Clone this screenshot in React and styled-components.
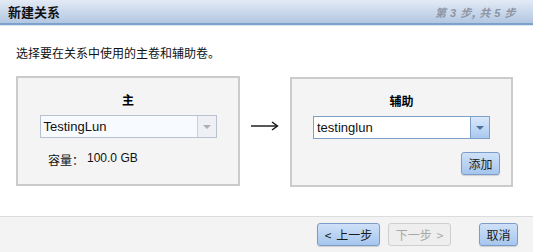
import React from "react";
import styled, { createGlobalStyle } from "styled-components";

const Global = createGlobalStyle`
  html, body {
    margin: 0;
    padding: 0;
    background: #ffffff;
  }
  body {
    font-family: "Liberation Sans", "Noto Sans CJK SC", sans-serif;
    font-size: 12px;
    color: #000;
  }
`;

const Wizard = styled.div`
  width: 533px;
  height: 252px;
  display: flex;
  flex-direction: column;
  background: #fff;
`;

const Header = styled.div`
  height: 23px;
  display: flex;
  align-items: center;
  justify-content: space-between;
  padding: 0 17px 0 8px;
  background: linear-gradient(#e3eaf5, #b3c7e2);
  border-bottom: 2px solid #7ba2cb;
  box-shadow: 0 1px 0 #dfe7f1;
`;

const Title = styled.div`
  font-family: "Noto Sans CJK SC", sans-serif;
  font-weight: bold;
  font-size: 13px;
  color: #111;
`;

const Step = styled.div`
  font-family: "Liberation Sans", "Noto Sans CJK SC", sans-serif;
  font-style: italic;
  font-weight: bold;
  font-size: 11px;
  color: #8c95a3;
  letter-spacing: 0.5px;
`;

const Body = styled.div`
  flex: 1;
  padding: 19px 16px 0 16px;
  display: flex;
  flex-direction: column;
`;

const Intro = styled.div`
  font-family: "Noto Sans CJK SC", sans-serif;
  font-size: 12px;
  color: #111;
  height: 18px;
  line-height: 18px;
`;

const PanelRow = styled.div`
  margin-top: 14px;
  display: flex;
  align-items: flex-start;
`;

const Panel = styled.div`
  box-sizing: border-box;
  width: ${(p) => p.$w}px;
  height: 110px;
  margin-top: ${(p) => p.$top || 0}px;
  border: 2px solid #cbcbcb;
  background: #f4f4f4;
  display: flex;
  flex-direction: column;
  align-items: center;
  padding-top: 14px;
`;

const PanelTitle = styled.div`
  font-family: "Noto Sans CJK SC", sans-serif;
  font-weight: bold;
  font-size: 12px;
  height: 16px;
  line-height: 16px;
`;

const Select = styled.div`
  box-sizing: border-box;
  width: 177px;
  height: 23px;
  margin-top: 7px;
  display: flex;
  border: 1px solid ${(p) => (p.$active ? "#7e9fc6" : "#b9c1cf")};
  background: ${(p) => (p.$active ? "#fff" : "#f7fbff")};
`;

const SelectText = styled.div`
  flex: 1;
  padding-left: 3px;
  line-height: 21px;
  font-size: 13px;
  color: #111;
`;

const SelectButton = styled.div`
  width: 18px;
  display: flex;
  align-items: center;
  justify-content: center;
  border-left: 1px solid ${(p) => (p.$active ? "#7e9fc6" : "#c9cfd9")};
  background: ${(p) =>
    p.$active ? "linear-gradient(#d9e8fb, #a9c9f0)" : "#eef0f4"};
  &::after {
    content: "";
    border-left: 4px solid transparent;
    border-right: 4px solid transparent;
    border-top: 4px solid ${(p) => (p.$active ? "#4f6f9a" : "#a9b0bb")};
  }
`;

const Capacity = styled.div`
  align-self: flex-start;
  margin: 13px 0 0 30px;
  font-size: 12px;
  color: #111;
  display: flex;
  gap: 3px;
`;

const Cjk = styled.span`
  font-family: "Noto Sans CJK SC", sans-serif;
`;

const Arrow = styled.div`
  width: 50px;
  display: flex;
  justify-content: center;
  padding-top: 45px;
`;

const AddRow = styled.div`
  align-self: stretch;
  display: flex;
  justify-content: flex-end;
  padding-right: 11px;
  margin-top: 13px;
`;

const Button = styled.button`
  box-sizing: border-box;
  height: 23px;
  min-width: ${(p) => p.$w || 39}px;
  padding: 0 6px;
  border-radius: 3px;
  font-family: "Noto Sans CJK SC", sans-serif;
  font-size: 12px;
  border: 1px solid ${(p) => (p.disabled ? "#cfcfcf" : "#7b9cc6")};
  background: ${(p) =>
    p.disabled ? "#eeeeee" : "linear-gradient(#cfe1f8, #a6c6ee)"};
  color: ${(p) => (p.disabled ? "#a8a8a8" : "#1a1a1a")};
  box-shadow: ${(p) => (p.disabled ? "none" : "0 1px 1px rgba(0,0,0,0.15)")};
  display: flex;
  align-items: center;
  justify-content: center;
  gap: 5px;
`;

const Footer = styled.div`
  height: 35px;
  border-top: 1px solid #dcdcdc;
  background: #f3f3f3;
  display: flex;
  align-items: center;
  justify-content: flex-end;
  padding: 0 15px 0 0;
  gap: 8px;
`;

const Spacer = styled.div`
  width: 12px;
`;

export default function App() {
  return (
    <Wizard>
      <Global />
      <Header>
        <Title>新建关系</Title>
        <Step>
          <Cjk>第</Cjk> 3 <Cjk>步,</Cjk> <Cjk>共</Cjk> 5 <Cjk>步</Cjk>
        </Step>
      </Header>
      <Body>
        <Intro>选择要在关系中使用的主卷和辅助卷。</Intro>
        <PanelRow>
          <Panel $w={224}>
            <PanelTitle>主</PanelTitle>
            <Select>
              <SelectText>TestingLun</SelectText>
              <SelectButton />
            </Select>
            <Capacity>
              <Cjk>容量：</Cjk>
              <span>100.0 GB</span>
            </Capacity>
          </Panel>
          <Arrow>
            <svg width="28" height="10" viewBox="0 0 28 10">
              <path d="M0 5 H26" stroke="#111" strokeWidth="1.4" />
              <path d="M21 1 L26.5 5 L21 9" stroke="#111" strokeWidth="1.4" fill="none" />
            </svg>
          </Arrow>
          <Panel $w={223} $top={1}>
            <PanelTitle>辅助</PanelTitle>
            <Select $active>
              <SelectText>testinglun</SelectText>
              <SelectButton $active />
            </Select>
            <AddRow>
              <Button>添加</Button>
            </AddRow>
          </Panel>
        </PanelRow>
      </Body>
      <Footer>
        <Button $w={63}>
          <span>&lt;</span>
          <span>上一步</span>
        </Button>
        <Button $w={63} disabled>
          <span>下一步</span>
          <span>&gt;</span>
        </Button>
        <Spacer />
        <Button $w={39}>取消</Button>
      </Footer>
    </Wizard>
  );
}
